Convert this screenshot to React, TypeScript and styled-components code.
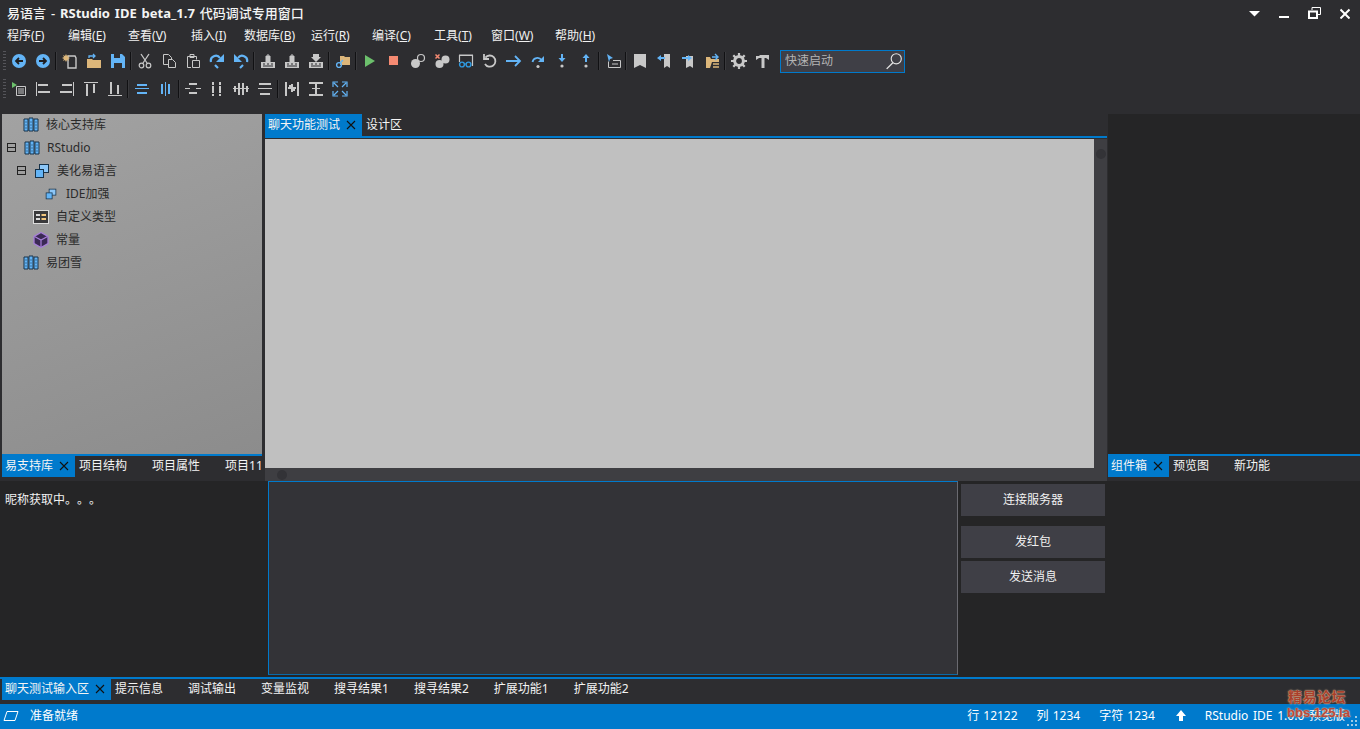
import React from "react";
import styled, { createGlobalStyle } from "styled-components";

const GlobalStyle = createGlobalStyle`
  html, body {
    margin: 0;
    padding: 0;
    background: #2d2d30;
  }
  body {
    font-family: "Noto Sans", "Noto Sans CJK SC", sans-serif;
    font-size: 12px;
    line-height: 16px;
    color: #f1f1f1;
  }
`;

const BLUE = "#007acc";
const SKY = "#63b4f6";
const GRAY = "#c8c8c8";
const TAN = "#dcb67a";

const Shell = styled.div`
  position: relative;
  display: flex;
  flex-direction: column;
  width: 1360px;
  height: 729px;
  overflow: hidden;
  background: #2d2d30;
`;

const TitleBar = styled.header`
  display: flex;
  align-items: center;
  justify-content: space-between;
  height: 26px;
  padding: 0 10px 0 7px;
`;

const Title = styled.div`
  font-size: 13px;
  font-weight: 500;
  word-spacing: 1.5px;
  color: #f4f4f4;
  white-space: nowrap;
`;

const TitleLatin = styled.span`
  font-weight: 700;
`;

const WindowButtons = styled.div`
  display: flex;
  align-items: flex-start;
  gap: 19px;
`;

const MenuBar = styled.nav`
  display: flex;
  align-items: center;
  box-sizing: border-box;
  height: 20px;
  padding: 0 0 1px 7px;
`;

const MenuItem = styled.div<{ $w: number }>`
  width: ${(p) => p.$w}px;
  flex: none;
  color: #f1f1f1;
  font-size: 12px;
  white-space: nowrap;
`;

const Toolbars = styled.div`
  display: flex;
  flex-direction: column;
  gap: 4px;
  padding: 3px 0 13px;
`;

const Toolbar = styled.div`
  display: flex;
  align-items: center;
  height: 24px;
  padding-left: 7px;
`;

const Tool = styled.div`
  display: flex;
  align-items: center;
  justify-content: center;
  width: 24px;
  height: 22px;
  flex: none;
`;

const Sep = styled.div`
  width: 1px;
  height: 18px;
  margin: 0 2px 0 0;
  flex: none;
  background: #111113;
  box-shadow: 1px 0 0 #3a3a3d;
`;

const QuickStart = styled.div`
  display: flex;
  align-items: center;
  justify-content: space-between;
  box-sizing: border-box;
  width: 125px;
  height: 23px;
  margin-left: 5px;
  padding: 0 1px 0 4px;
  border: 1px solid ${BLUE};
  background: #3f3f46;
  color: #b4b4b4;
`;

const Upper = styled.div`
  display: flex;
  height: 367px;
  padding-left: 2px;
`;

const Lower = styled.div`
  display: flex;
  height: 196px;
  background: #252526;
  padding-left: 2px;
`;

const SidePane = styled.section<{ $w: number }>`
  display: flex;
  flex-direction: column;
  width: ${(p) => p.$w}px;
  flex: none;
`;

const Tree = styled.div`
  flex: 1;
  min-height: 0;
  background: linear-gradient(160deg, #a2a2a2 0%, #8c8c8c 100%);
  color: #2a2a2a;
`;

const TreeRow = styled.div<{ $depth: number }>`
  display: flex;
  align-items: center;
  box-sizing: border-box;
  height: 23px;
  padding: 0 0 2px ${(p) => p.$depth}px;
  white-space: nowrap;
`;

const Expander = styled.span`
  display: flex;
  width: 9px;
  height: 9px;
  flex: none;
  margin-right: 7px;
  box-sizing: border-box;
  border: 1px solid #222;
  align-items: center;
  &::before {
    content: "";
    display: block;
    width: 100%;
    height: 1px;
    background: #222;
  }
`;

const TreeIcon = styled.span`
  display: flex;
  width: 18px;
  justify-content: center;
  margin-right: 6px;
  flex: none;
`;

const EmptyPane = styled.div`
  flex: 1;
  background: #252526;
`;

const TabStrip = styled.div<{ $top?: boolean }>`
  display: flex;
  align-items: stretch;
  box-sizing: border-box;
  height: ${(p) => (p.$top ? 24 : 27)}px;
  flex: none;
  overflow: hidden;
  background: #2d2d30;
  padding-bottom: ${(p) => (p.$top ? 0 : 4)}px;
  ${(p) =>
    p.$top
      ? `border-bottom: 2px solid ${BLUE};`
      : `border-top: 2px solid ${BLUE};`}
`;

const BottomTabs = styled(TabStrip)`
  padding-left: 2px;
`;

const Tab = styled.div<{ $active?: boolean }>`
  display: flex;
  align-items: center;
  flex: none;
  gap: 6px;
  padding: ${(p) => (p.$active ? "0 6px 1px 3px" : "0 21px 1px 4px")};
  background: ${(p) => (p.$active ? BLUE : "transparent")};
  color: #f4f4f4;
  white-space: nowrap;
`;

const Editor = styled.section`
  display: flex;
  flex-direction: column;
  width: 842px;
  margin-left: 3px;
  margin-right: 1px;
  flex: none;
  background: #2d2d30;
`;

const EditorBody = styled.div`
  display: flex;
  flex: 1;
  min-height: 0;
  padding-top: 1px;
`;

const Canvas = styled.div`
  flex: 1;
  background: #c0c0c0;
`;

const VScroll = styled.div`
  display: flex;
  justify-content: center;
  width: 13px;
  flex: none;
  padding-top: 10px;
  box-sizing: border-box;
  background: #3e3e42;
`;

const HScroll = styled.div`
  display: flex;
  align-items: center;
  height: 13px;
  flex: none;
  padding-left: 12px;
  background: #3e3e42;
`;

const Thumb = styled.span`
  display: block;
  width: 10px;
  height: 10px;
  border-radius: 50%;
  background: #333337;
`;

const Nickname = styled.div`
  width: 263px;
  flex: none;
  padding: 11px 3px;
  box-sizing: border-box;
  color: #f1f1f1;
  text-spacing-trim: space-all;
`;

const MessageBox = styled.div`
  box-sizing: border-box;
  width: 690px;
  height: 194px;
  margin-left: 3px;
  flex: none;
  background: #333337;
  border: 1px solid ${BLUE};
  border-right-color: #6a6a70;
  border-bottom-color: #0a6aa8;
`;

const ButtonColumn = styled.div`
  display: flex;
  flex-direction: column;
  width: 144px;
  margin-left: 3px;
  padding-top: 3px;
  flex: none;
`;

const ActionButton = styled.div<{ $gap?: number }>`
  display: flex;
  align-items: center;
  justify-content: center;
  box-sizing: border-box;
  height: 32px;
  padding-bottom: 1px;
  margin-top: ${(p) => p.$gap ?? 0}px;
  background: #3f3f46;
  color: #f1f1f1;
`;

const StatusBar = styled.footer`
  display: flex;
  align-items: center;
  justify-content: space-between;
  box-sizing: border-box;
  height: 25px;
  flex: none;
  padding: 0 15px 1px 3px;
  background: ${BLUE};
  color: #fff;
`;

const StatusGroup = styled.div`
  display: flex;
  align-items: center;
  gap: 19px;
  word-spacing: 1px;
  white-space: nowrap;
`;

const StatusLeft = styled(StatusGroup)`
  gap: 11px;
`;

const StatusVersion = styled.span`
  word-spacing: 1.6px;
`;

const UpArrow = styled.svg`
  margin-left: 2px;
`;

const Watermark = styled.div`
  position: absolute;
  left: 1287px;
  top: 689px;
  width: 60px;
  text-align: center;
  font-weight: 700;
  line-height: 16px;
  color: #a8402c;
  text-shadow: 0 0 2px #e8c09c, 0 0 1px #e8c09c;
`;

const WatermarkTitle = styled.div`
  font-size: 14px;
  letter-spacing: 0.5px;
`;

const WatermarkUrl = styled.div`
  font-size: 13px;
  font-family: "Liberation Sans", sans-serif;
  color: #b8483a;
`;

const Grip = styled.svg`
  position: absolute;
  right: 2px;
  bottom: 2px;
`;

const Gripper = styled.div`
  position: absolute;
  left: 3px;
  width: 3px;
  height: 20px;
  background: repeating-linear-gradient(#55555a 0 1px, transparent 1px 3px);
`;

const Gripper1 = styled(Gripper)`
  top: 51px;
`;

const Gripper2 = styled(Gripper)`
  top: 79px;
`;

const Svg: React.FC<{ children: React.ReactNode; size?: number }> = ({ children, size = 16 }) => (
  <svg width={size} height={size} viewBox="0 0 16 16" fill="none">
    {children}
  </svg>
);

const Bars: React.FC<{ rects: number[][]; color?: string }> = ({ rects, color = GRAY }) => (
  <Svg>
    <g shapeRendering="crispEdges" fill={color}>
      {rects.map((r, i) => (
        <rect key={i} x={r[0]} y={r[1]} width={r[2]} height={r[3]} />
      ))}
    </g>
  </Svg>
);

const CircleArrow = ({ right }: { right?: boolean }) => (
  <Svg>
    <circle cx="8" cy="8" r="7" fill={SKY} />
    <path
      d={right ? "M4 8h7M8 5l3 3-3 3" : "M12 8H5M8 5L5 8l3 3"}
      stroke="#1e1e20"
      strokeWidth="1.8"
    />
  </Svg>
);

const Printer = ({ down }: { down?: boolean }) => (
  <Svg>
    <path d="M1 9h14v6H1z" fill={GRAY} />
    <path d="M3 11h2M7 11h2M11 11h2M3 13h10" stroke="#2d2d30" />
    {down ? (
      <path d="M5 1h6v3h2l-5 5-5-5h2z" fill={GRAY} />
    ) : (
      <path d="M6 3h4v6H6zM8 1v2" fill={GRAY} stroke={GRAY} />
    )}
  </Svg>
);

const Library = () => (
  <Svg>
    <path d="M1 2h4v12H1zM6 1h4v13H6zM11 2h4v12h-4z" fill={SKY} stroke="#16324a" />
    <path d="M2.5 5h1M2.5 8h1M2.5 11h1M7.5 5h1M7.5 8h1M7.5 11h1M12.5 5h1M12.5 8h1M12.5 11h1" stroke="#16324a" />
  </Svg>
);

const Windows = ({ size = 16 }: { size?: number }) => (
  <Svg size={size}>
    <rect x="5.5" y="1.5" width="9" height="8" fill="#8cc6f7" stroke="#16324a" />
    <rect x="1.5" y="6.5" width="8" height="8" fill={SKY} stroke="#16324a" />
  </Svg>
);

const CloseX = ({ color = "#111" }: { color?: string }) => (
  <svg width="10" height="10" viewBox="0 0 10 10">
    <path d="M1 1l8 8M9 1L1 9" stroke={color} strokeWidth="1.1" />
  </svg>
);

const toolbarOne: (React.ReactNode | null)[] = [
  <CircleArrow />,
  <CircleArrow right />,
  null,
  <Svg>
    <path d="M6 3h7l1 2v10H6z" stroke={GRAY} strokeWidth="1.4" />
    <path d="M4 1l1 2 2-1-1 2 2 1-2 1 1 2-2-1-1 2-1-2-2 1 1-2-2-1 2-1-1-2 2 1z" fill={TAN} />
  </Svg>,
  <Svg>
    <path d="M1 6h5l1 1h8v8H1z" fill={TAN} />
    <path d="M3 5V3h6M7 1l2 2-2 2" stroke={SKY} strokeWidth="1.3" />
  </Svg>,
  <Svg>
    <path d="M1 1h11l3 3v11H1z" fill={SKY} />
    <path d="M4 1h6v4H4z" fill="#2d2d30" />
    <path d="M4 10h8v5H4z" fill="#2d2d30" />
  </Svg>,
  null,
  <Svg>
    <path d="M4 1l6 9M12 1L6 10" stroke={GRAY} strokeWidth="1.3" />
    <circle cx="4.5" cy="12.5" r="2.3" stroke={GRAY} strokeWidth="1.2" />
    <circle cx="11.5" cy="12.5" r="2.3" stroke={GRAY} strokeWidth="1.2" />
  </Svg>,
  <Svg>
    <path d="M2.5 1.5h5l3 3v7h-8z" stroke={GRAY} />
    <path d="M7.5 6.5h4l3 3v5h-7z" fill="#2d2d30" stroke={GRAY} />
  </Svg>,
  <Svg>
    <path d="M2.5 3.5h9v3M6 14.5H2.5v-11" stroke={GRAY} />
    <path d="M5 1.5h4v3H5z" stroke={GRAY} />
    <path d="M7.5 7.5h7v7h-7z" stroke={GRAY} />
  </Svg>,
  <Svg>
    <path d="M2 9a5 5 0 0 1 9-4" stroke={SKY} strokeWidth="2.2" />
    <path d="M15 1v8H7z" fill={SKY} />
    <path d="M6 12l3 3" stroke={SKY} strokeWidth="2.2" />
  </Svg>,
  <Svg>
    <path d="M14 9a5 5 0 0 0-9-4" stroke={SKY} strokeWidth="2.2" />
    <path d="M1 1v8h8z" fill={SKY} />
    <path d="M10 12l-3 3" stroke={SKY} strokeWidth="2.2" />
  </Svg>,
  null,
  <Printer />,
  <Printer />,
  <Printer down />,
  null,
  <Svg>
    <path d="M5 3h4l1 1h5v8H5z" fill={TAN} />
    <circle cx="4" cy="12" r="2.4" stroke={SKY} strokeWidth="1.4" />
    <path d="M5 10l3-3" stroke={SKY} strokeWidth="1.4" />
  </Svg>,
  null,
  <Svg>
    <path d="M3 2l10 6-10 6z" fill="#6cc06c" />
  </Svg>,
  <Svg>
    <rect x="3" y="3" width="9" height="9" fill="#f58a72" />
  </Svg>,
  <Svg>
    <circle cx="5.5" cy="10.5" r="4.5" fill={GRAY} />
    <circle cx="11" cy="5" r="3.5" stroke={GRAY} strokeWidth="1.2" />
  </Svg>,
  <Svg>
    <circle cx="5.5" cy="11" r="4" fill={GRAY} />
    <circle cx="11.5" cy="6.5" r="4" fill={GRAY} />
    <path d="M1.5 1.5l4 4M5.5 1.5l-4 4" stroke="#f58a72" strokeWidth="1.5" />
  </Svg>,
  <Svg>
    <path d="M1.5 9V2.5h13V13M1 2h14" stroke={GRAY} strokeWidth="1.2" />
    <circle cx="4" cy="11.5" r="2.4" stroke="#2f9ae0" strokeWidth="1.4" />
    <circle cx="10.5" cy="11.5" r="2.4" stroke="#2f9ae0" strokeWidth="1.4" />
    <path d="M6.4 11h1.7" stroke="#2f9ae0" />
  </Svg>,
  <Svg>
    <path d="M3.4 4.6A5.6 5.6 0 1 1 3 11" stroke={GRAY} strokeWidth="1.8" />
    <path d="M2 1v5h5" stroke={GRAY} strokeWidth="1.8" />
  </Svg>,
  <Svg>
    <path d="M0 8h14M9 3l5 5-5 5" stroke={SKY} strokeWidth="1.8" />
  </Svg>,
  <Svg>
    <path d="M2.5 9a5 5 0 0 1 9-2" stroke={SKY} strokeWidth="1.8" />
    <path d="M14 3v6H8z" fill={SKY} />
    <circle cx="8" cy="13.5" r="1.6" fill={GRAY} />
  </Svg>,
  <Svg>
    <path d="M8 1v4" stroke={SKY} strokeWidth="2" />
    <path d="M4.5 5h7L8 9z" fill={SKY} />
    <circle cx="8" cy="13" r="1.6" fill={GRAY} />
  </Svg>,
  <Svg>
    <path d="M8 9V5" stroke={SKY} strokeWidth="2" />
    <path d="M4.5 5h7L8 1z" fill={SKY} />
    <circle cx="8" cy="13" r="1.6" fill={GRAY} />
  </Svg>,
  null,
  <Svg>
    <path d="M2 1l6 4-3 1-1 3z" fill={SKY} />
    <path d="M3.5 8.5v6h12v-7H8M7 11h6" stroke={GRAY} />
  </Svg>,
  null,
  <Svg>
    <path d="M2 1h12v14l-6-3-6 3z" fill={GRAY} />
  </Svg>,
  <Svg>
    <path d="M8 1h6v14l-3-2-3 2z" fill={GRAY} />
    <path d="M1 5l4-3v2h4v2H5v2z" fill={SKY} />
  </Svg>,
  <Svg>
    <path d="M6 3h7v12l-3-2-4 2z" fill={GRAY} />
    <path d="M12 5L8 2v2H2v2h6v2z" fill={SKY} />
  </Svg>,
  <Svg>
    <path d="M2 4h4l1 2h8v3H8l-2 6H2z" fill={TAN} />
    <path d="M8 4h5M11 1l3 3-3 3" stroke={SKY} strokeWidth="1.4" />
    <path d="M9 11h6M9 14h6" stroke={TAN} strokeWidth="1.6" />
  </Svg>,
  null,
  <Svg>
    <circle cx="8" cy="8" r="4.4" stroke={GRAY} strokeWidth="3" />
    <path
      d="M8 0v3M8 13v3M0 8h3M13 8h3M2.3 2.3l2.1 2.1M11.6 11.6l2.1 2.1M13.7 2.3l-2.1 2.1M4.4 11.6l-2.1 2.1"
      stroke={GRAY}
      strokeWidth="2.2"
    />
  </Svg>,
  <Svg>
    <path d="M1 3h3l1-1h9v5l-3-2H9.5v10h-3V5H4L1 7z" fill={GRAY} />
  </Svg>,
];

const toolbarTwo: (React.ReactNode | null)[] = [
  <Svg>
    <path d="M1 1l5 3-5 3z" fill="#6cc06c" />
    <path d="M5.5 5.5h9v9h-9z" stroke={GRAY} />
    <path d="M7 8h6M7 10h6M7 12h6" stroke={GRAY} />
  </Svg>,
  <Bars rects={[[1, 1, 1, 14], [3, 3, 10, 2], [3, 10, 12, 2]]} />,
  <Bars rects={[[14, 1, 1, 14], [3, 3, 10, 2], [1, 10, 12, 2]]} />,
  <Bars rects={[[1, 1, 14, 1], [3, 3, 2, 12], [10, 3, 2, 9]]} />,
  <Bars rects={[[1, 14, 14, 1], [3, 1, 2, 12], [10, 4, 2, 9]]} />,
  null,
  <Bars color={SKY} rects={[[1, 7, 14, 1], [3, 3, 10, 2], [3, 11, 10, 2]]} />,
  <Bars color={SKY} rects={[[7, 1, 1, 14], [3, 3, 2, 10], [10, 3, 2, 10]]} />,
  null,
  <Bars rects={[[4, 2, 8, 2], [4, 11, 8, 2], [0, 7, 5, 1], [11, 7, 5, 1]]} />,
  <Bars rects={[[3, 1, 2, 3], [3, 5, 2, 7], [3, 13, 2, 2], [10, 1, 2, 3], [10, 5, 2, 7], [10, 13, 2, 2]]} />,
  <Bars rects={[[1, 5, 2, 6], [5, 2, 2, 12], [9, 2, 2, 12], [13, 5, 2, 6], [0, 7, 16, 1]]} />,
  <Bars rects={[[2, 2, 12, 2], [1, 7, 14, 1], [3, 12, 10, 2]]} />,
  null,
  <Svg>
    <g shapeRendering="crispEdges" fill={GRAY}>
      <rect x="1" y="1" width="2" height="14" />
      <rect x="13" y="1" width="2" height="14" />
      <rect x="7" y="3" width="2" height="8" />
      <rect x="4" y="6" width="8" height="2" />
      <rect x="5" y="4" width="2" height="2" />
      <rect x="9" y="8" width="2" height="2" />
    </g>
  </Svg>,
  <Bars rects={[[1, 1, 14, 2], [1, 13, 14, 2], [7, 3, 2, 10], [4, 7, 8, 1]]} />,
  <Svg>
    <path
      d="M1 6V1h5M15 6V1h-5M1 10v5h5M15 10v5h-5M2 2l4 4M14 2l-4 4M2 14l4-4M14 14l-4-4"
      stroke={SKY}
      strokeWidth="1.2"
    />
  </Svg>,
];

const menus: [string, string, number][] = [
  ["程序", "F", 61],
  ["编辑", "E", 60],
  ["查看", "V", 63],
  ["插入", "I", 53],
  ["数据库", "B", 67],
  ["运行", "R", 61],
  ["编译", "C", 62],
  ["工具", "T", 57],
  ["窗口", "W", 64],
  ["帮助", "H", 50],
];

const renderTools = (items: (React.ReactNode | null)[]) =>
  items.map((item, i) =>
    item === null ? <Sep key={i} /> : <Tool key={i}>{item}</Tool>
  );

const ActiveTab: React.FC<{ label: string }> = ({ label }) => (
  <Tab $active>
    {label}
    <CloseX />
  </Tab>
);

export default function App() {
  return (
    <>
      <GlobalStyle />
      <Shell>
        <TitleBar>
          <Title>
            易语言 - <TitleLatin>RStudio IDE beta_1.7</TitleLatin> 代码调试专用窗口
          </Title>
          <WindowButtons>
            <svg width="11" height="12" viewBox="0 0 11 12">
              <path d="M0 4h11L5.5 9.5z" fill="#fff" />
            </svg>
            <svg width="10" height="12" viewBox="0 0 10 12">
              <rect y="9" width="10" height="2" fill="#fff" />
            </svg>
            <svg width="13" height="12" viewBox="0 0 13 12" fill="none">
              <path d="M4 3V.5h8.5v7H10" stroke="#fff" />
              <path d="M1 4.5h8v6.5H1z" stroke="#fff" strokeWidth="2" />
            </svg>
            <svg width="10" height="12" viewBox="0 0 10 12">
              <path d="M.5 2.5l9 9M9.5 2.5l-9 9" stroke="#fff" strokeWidth="2" />
            </svg>
          </WindowButtons>
        </TitleBar>

        <MenuBar>
          {menus.map(([name, key, w]) => (
            <MenuItem key={key} $w={w}>
              {name}(<u>{key}</u>)
            </MenuItem>
          ))}
        </MenuBar>

        <Toolbars>
          <Toolbar>
            {renderTools(toolbarOne)}
            <QuickStart>
              快速启动
              <svg width="18" height="18" viewBox="0 0 16 16" fill="none">
                <circle cx="10" cy="6" r="4.5" stroke="#e4e4e4" />
                <path d="M7 9.5L1.5 15" stroke="#e4e4e4" strokeWidth="1.2" />
              </svg>
            </QuickStart>
          </Toolbar>
          <Toolbar>{renderTools(toolbarTwo)}</Toolbar>
        </Toolbars>

        <Upper>
          <SidePane $w={260}>
            <Tree>
              <TreeRow $depth={20}>
                <TreeIcon><Library /></TreeIcon>核心支持库
              </TreeRow>
              <TreeRow $depth={5}>
                <Expander /><TreeIcon><Library /></TreeIcon>RStudio
              </TreeRow>
              <TreeRow $depth={15}>
                <Expander /><TreeIcon><Windows /></TreeIcon>美化易语言
              </TreeRow>
              <TreeRow $depth={40}>
                <TreeIcon><Windows size={12} /></TreeIcon>IDE加强
              </TreeRow>
              <TreeRow $depth={30}>
                <TreeIcon>
                  <Svg>
                    <rect x="0.5" y="1.5" width="15" height="13" fill="#3a3a3c" stroke="#ddd" />
                    <path d="M3 6h4M3 10h4" stroke="#ddd" strokeWidth="2" />
                    <path d="M8.5 6h4.5M8.5 10h4.5" stroke="#f3c77e" strokeWidth="2" />
                  </Svg>
                </TreeIcon>
                自定义类型
              </TreeRow>
              <TreeRow $depth={30}>
                <TreeIcon>
                  <Svg>
                    <path d="M8 .5l7 4v7l-7 4-7-4v-7z" fill="#3b2a55" stroke="#a77fd8" strokeWidth="1.3" />
                    <path d="M1.5 4.5L8 8l6.5-3.5M8 8v7" stroke="#a77fd8" strokeWidth="1.2" />
                  </Svg>
                </TreeIcon>
                常量
              </TreeRow>
              <TreeRow $depth={20}>
                <TreeIcon><Library /></TreeIcon>易团雪
              </TreeRow>
            </Tree>
            <TabStrip>
              <ActiveTab label="易支持库" />
              <Tab>项目结构</Tab>
              <Tab>项目属性</Tab>
              <Tab>项目11</Tab>
            </TabStrip>
          </SidePane>

          <Editor>
            <TabStrip $top>
              <ActiveTab label="聊天功能测试" />
              <Tab>设计区</Tab>
            </TabStrip>
            <EditorBody>
              <Canvas />
              <VScroll><Thumb /></VScroll>
            </EditorBody>
            <HScroll><Thumb /></HScroll>
          </Editor>

          <SidePane $w={252}>
            <EmptyPane />
            <TabStrip>
              <ActiveTab label="组件箱" />
              <Tab>预览图</Tab>
              <Tab>新功能</Tab>
            </TabStrip>
          </SidePane>
        </Upper>

        <Lower>
          <Nickname>昵称获取中。。。</Nickname>
          <MessageBox />
          <ButtonColumn>
            <ActionButton>连接服务器</ActionButton>
            <ActionButton $gap={10}>发红包</ActionButton>
            <ActionButton $gap={3}>发送消息</ActionButton>
          </ButtonColumn>
        </Lower>

        <BottomTabs>
          <ActiveTab label="聊天测试输入区" />
          <Tab>提示信息</Tab>
          <Tab>调试输出</Tab>
          <Tab>变量监视</Tab>
          <Tab>搜寻结果1</Tab>
          <Tab>搜寻结果2</Tab>
          <Tab>扩展功能1</Tab>
          <Tab>扩展功能2</Tab>
        </BottomTabs>

        <StatusBar>
          <StatusLeft>
            <svg width="16" height="12" viewBox="0 0 16 12" fill="none">
              <path d="M4 1.5h11l-3 9H1z" stroke="#fff" />
            </svg>
            准备就绪
          </StatusLeft>
          <StatusGroup>
            <span>行 12122</span>
            <span>列 1234</span>
            <span>字符 1234</span>
            <UpArrow width="10" height="12" viewBox="0 0 10 12">
              <path d="M5 0l5 6H7v5H3V6H0z" fill="#fff" />
            </UpArrow>
            <StatusVersion>RStudio IDE 1.0.0 预览版</StatusVersion>
          </StatusGroup>
          <Grip width="12" height="12" viewBox="0 0 12 12">
            <path d="M9 1h2v2H9zM5 5h2v2H5zM9 5h2v2H9zM1 9h2v2H1zM5 9h2v2H5zM9 9h2v2H9z" fill="#9ccbe8" />
          </Grip>
        </StatusBar>

        <Gripper1 />
        <Gripper2 />
        <Watermark>
          <WatermarkTitle>精易论坛</WatermarkTitle>
          <WatermarkUrl>bbs.125.la</WatermarkUrl>
        </Watermark>
      </Shell>
    </>
  );
}
